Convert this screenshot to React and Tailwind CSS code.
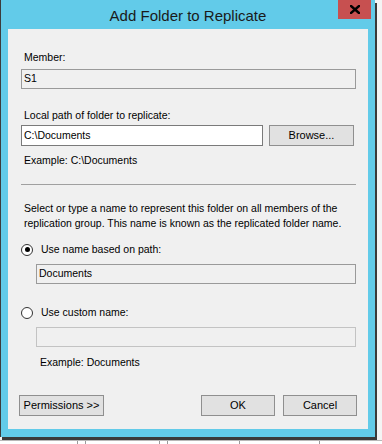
import React from 'react';

const font = { fontFamily: '"Liberation Sans", Arial, sans-serif' };

const ReadOnlyBox = ({ value, className = '' }) => (
    <div className={`h-[20px] border border-[#9a9a9a] bg-[#f0f0f0] flex items-center pl-[2px] text-[10.5px] text-black ${className}`}>
        {value}
    </div>
);

const Btn = ({ children, className = '' }) => (
    <button className={`h-[21px] border border-[#8f8f8f] bg-[#e1e1e1] text-[11px] text-black flex items-center justify-center ${className}`}>
        {children}
    </button>
);

const Radio = ({ checked, label }) => (
    <div className="flex items-center h-[15px]">
        <span className="w-[12px] h-[12px] rounded-full border border-[#333] bg-white flex items-center justify-center">
            {checked && <span className="w-[5px] h-[5px] rounded-full bg-black" />}
        </span>
        <span className="ml-[8px] text-[10.5px] text-black">{label}</span>
    </div>
);

export default function App() {
    return (
        <div className="w-[382px] h-[444px] bg-[#f4f4f4] overflow-hidden flex flex-col" style={font}>
            {/* dialog window */}
            <div className="w-[375px] h-[437px] bg-[#62cbe9] border-l border-[#3c3c3c] shadow-[2px_3px_0_#3a3a3a] flex flex-col shrink-0">
                <div className="h-[29px] relative flex items-center justify-center">
                    <span className="text-[15px] text-[#1a1a1a] leading-none mt-[1px]">Add Folder to Replicate</span>
                    <div className="absolute top-0 right-[4px] w-[33px] h-[19px] bg-[#c75050] flex items-center justify-center">
                        <svg width="10" height="9" viewBox="0 0 10 9">
                            <path d="M1 1 L9 8 M9 1 L1 8" stroke="#000" strokeWidth="2.4" strokeLinecap="square" />
                        </svg>
                    </div>
                </div>

                <div className="ml-[7px] w-[360px] h-[400px] bg-[#f0f0f0] flex flex-col pt-[21px] pl-[13px] pr-[12px]">
                    <div className="h-[15px] pl-[3px] text-[10.5px] text-black leading-[15px]">Member:</div>
                    <ReadOnlyBox value="S1" className="mt-[4px]" />

                    <div className="mt-[19px] h-[15px] pl-[3px] text-[10.5px] text-black leading-[15px]">Local path of folder to replicate:</div>
                    <div className="mt-[2px] flex items-center gap-[6px]">
                        <div className="w-[242px] h-[21px] border border-[#7a7a7a] bg-white flex items-center pl-[2px] text-[10.5px] text-black">C:\Documents</div>
                        <Btn className="w-[85px]">Browse...</Btn>
                    </div>
                    <div className="mt-[7px] h-[15px] pl-[3px] text-[10.5px] text-black leading-[15px]">Example: C:\Documents</div>

                    <div className="mt-[16px] h-px bg-[#a0a0a0]" />

                    <p className="mt-[16px] pl-[3px] text-[10.5px] text-black leading-[15px]">
                        Select or type a name to represent this folder on all members of the
                        <br />
                        replication group. This name is known as the replicated folder name.
                    </p>

                    <div className="mt-[11px]">
                        <Radio checked label="Use name based on path:" />
                    </div>
                    <ReadOnlyBox value="Documents" className="mt-[7px] ml-[15px]" />

                    <div className="mt-[21px]">
                        <Radio label="Use custom name:" />
                    </div>
                    <div className="mt-[7px] ml-[15px] h-[20px] border border-[#c3c3c3] bg-[#f0f0f0]" />
                    <div className="mt-[8px] ml-[19px] h-[15px] text-[10.5px] text-black leading-[15px]">Example: Documents</div>

                    <div className="mt-[25px] flex items-center">
                        <Btn className="w-[85px] ml-[-2px]">Permissions &gt;&gt;</Btn>
                        <Btn className="w-[74px] ml-auto">OK</Btn>
                        <Btn className="w-[74px] ml-[8px] mr-[-1px]">Cancel</Btn>
                    </div>
                </div>
            </div>

            {/* background list behind dialog */}
            <div className="mt-[3px] flex h-[4px] bg-white border-t border-[#b8b8b8]">
                <div className="w-[78px] border-r border-[#9a9a9a]" />
                <div className="w-[8px] border-r border-[#9a9a9a]" />
                <div className="w-[74px] border-r border-[#9a9a9a]" />
                <div className="w-[8px] border-r border-[#9a9a9a]" />
                <div className="w-[72px] border-r border-[#9a9a9a]" />
                <div className="w-[80px] border-r border-[#9a9a9a]" />
            </div>
        </div>
    );
}
